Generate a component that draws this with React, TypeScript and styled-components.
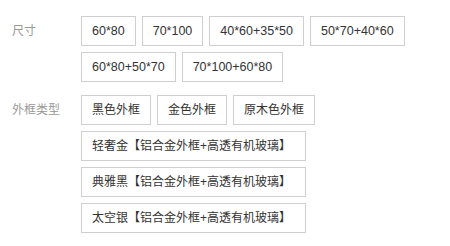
import React from "react";
import styled, { createGlobalStyle } from "styled-components";

const Global = createGlobalStyle`
  html, body { margin: 0; padding: 0; background: #fff; }
  body { font-family: "Liberation Sans", "Noto Sans CJK SC", sans-serif; }
`;

const Page = styled.div`
  padding: 16px 0 0 12px;
  display: flex;
  flex-direction: column;
  gap: 13px;
  width: 438px;
`;

const Section = styled.div`
  display: flex;
  align-items: flex-start;
`;

const Label = styled.div`
  width: 69px;
  flex: none;
  height: 30px;
  line-height: 30px;
  font-size: 12px;
  color: #999;
`;

const Options = styled.div`
  display: flex;
  flex-wrap: wrap;
  gap: 6px 6px;
  flex: 1;
`;

const Option = styled.div<{ $wide?: boolean; $digits?: boolean }>`
  box-sizing: border-box;
  height: 30px;
  line-height: 28px;
  border: 1px solid #cfcfcf;
  padding: ${(p) => (p.$wide ? "0 14px 0 10px" : "0 10px")};
  font-size: ${(p) => (p.$digits ? "12.5px" : "12px")};
  color: #333;
  white-space: nowrap;
  background: #fff;
`;

const sizes = ["60*80", "70*100", "40*60+35*50", "50*70+40*60", "60*80+50*70", "70*100+60*80"];
const frames = ["黑色外框", "金色外框", "原木色外框"];
const series = ["轻奢金", "典雅黑", "太空银"];

export default function App() {
  return (
    <>
      <Global />
      <Page>
        <Section>
          <Label>尺寸</Label>
          <Options>
            {sizes.map((s) => (
              <Option key={s} $digits>
                {s}
              </Option>
            ))}
          </Options>
        </Section>
        <Section>
          <Label>外框类型</Label>
          <Options>
            {frames.map((s) => (
              <Option key={s}>{s}</Option>
            ))}
            {series.map((s) => (
              <Option key={s} $wide>
                {s}【铝合金外框+高透有机玻璃】
              </Option>
            ))}
          </Options>
        </Section>
      </Page>
    </>
  );
}
